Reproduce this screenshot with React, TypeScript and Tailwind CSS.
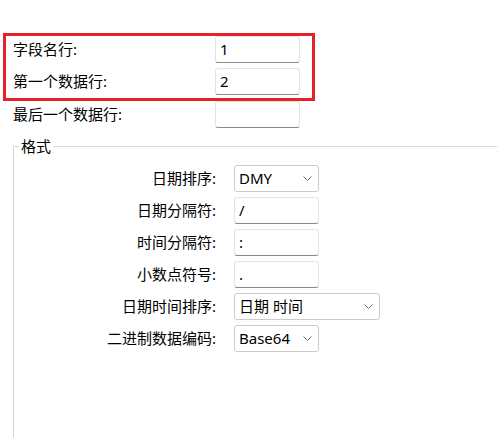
import React from "react";

const Chevron = () => (
  <svg width="9" height="5" viewBox="0 0 9 5" className="shrink-0">
    <path d="M0.5 0.5 L4.5 4.5 L8.5 0.5" fill="none" stroke="#6b6b6b" strokeWidth="1" />
  </svg>
);

const TextBox = ({ value }: { value: string }) => (
  <div className="h-[27px] w-[85px] shrink-0 flex items-center rounded-[3px] border border-[#e3e3e3] border-b-[#8a8a8a] bg-white pl-[4px] text-black leading-none">
    {value}
  </div>
);

const Select = ({ value, wide }: { value: string; wide?: boolean }) => (
  <div
    className={
      wide
        ? "h-[27px] w-[146px] shrink-0 flex items-center justify-between rounded-[3px] border border-[#cbcbcb] bg-white pl-[4px] pr-[6px] text-black leading-none"
        : "h-[27px] w-[85px] shrink-0 flex items-center justify-between rounded-[3px] border border-[#cbcbcb] bg-white pl-[4px] pr-[6px] text-black leading-none"
    }
  >
    <span>{value}</span>
    <Chevron />
  </div>
);

const GroupRow = ({ label, children }: { label: string; children: React.ReactNode }) => (
  <div className="flex h-[27px] items-center">
    <div className="w-[202px] shrink-0 text-right leading-none">{label}</div>
    <div className="ml-[18px]">{children}</div>
  </div>
);

export default function App() {
  return (
    <div className="flex h-[438px] w-[497px] flex-col overflow-hidden bg-white text-[15px] text-black font-['Noto_Sans','Noto_Sans_CJK_SC',sans-serif]">
      <div className="pt-[33px]">
        <div className="ml-[3px] w-[312px] border-[3px] border-[#e8202a] pb-[3px]">
          <div className="flex h-[27px] items-center">
            <div className="w-[209px] shrink-0 pl-[7px] leading-none">字段名行:</div>
            <TextBox value="1" />
          </div>
          <div className="mt-[5px] flex h-[27px] items-center">
            <div className="w-[209px] shrink-0 pl-[7px] leading-none">第一个数据行:</div>
            <TextBox value="2" />
          </div>
        </div>
        <div className="flex h-[27px] items-center">
          <div className="w-[215px] shrink-0 pl-[13px] leading-none">最后一个数据行:</div>
          <TextBox value="" />
        </div>
      </div>

      <fieldset className="ml-[13px] mt-[8px] min-h-0 w-[484px] flex-1 border-l border-t border-r-0 border-b-0 border-[#d6d6d6]">
        <legend className="ml-[5px] px-[2px] leading-[20px]">格式</legend>
        <div className="flex flex-col gap-[5px] pt-[9px]">
          <GroupRow label="日期排序:">
            <Select value="DMY" />
          </GroupRow>
          <GroupRow label="日期分隔符:">
            <TextBox value="/" />
          </GroupRow>
          <GroupRow label="时间分隔符:">
            <TextBox value=":" />
          </GroupRow>
          <GroupRow label="小数点符号:">
            <TextBox value="." />
          </GroupRow>
          <GroupRow label="日期时间排序:">
            <Select value="日期 时间" wide />
          </GroupRow>
          <GroupRow label="二进制数据编码:">
            <Select value="Base64" />
          </GroupRow>
        </div>
      </fieldset>
    </div>
  );
}
